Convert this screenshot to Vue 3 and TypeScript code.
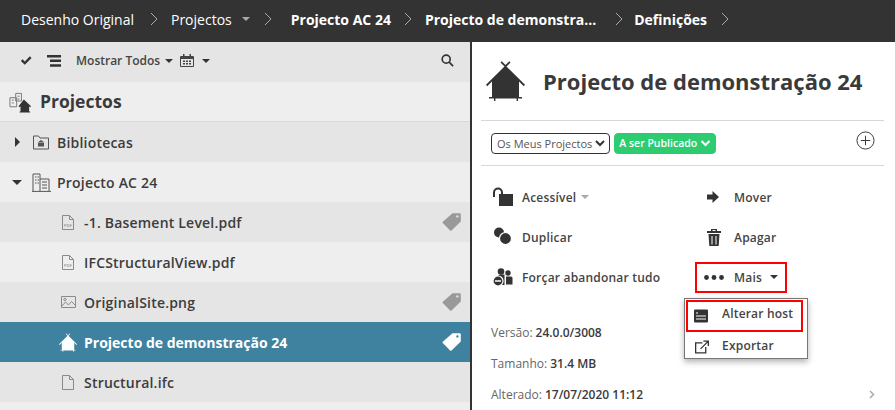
<script setup lang="ts">
interface Linha {
  nome: string;
  icone: "pdf" | "img" | "casa" | "doc";
  etiqueta?: boolean;
  ativa?: boolean;
}

const ficheiros: Linha[] = [
  { nome: "-1. Basement Level.pdf", icone: "pdf", etiqueta: true },
  { nome: "IFCStructuralView.pdf", icone: "pdf" },
  { nome: "OriginalSite.png", icone: "img", etiqueta: true },
  { nome: "Projecto de demonstração 24", icone: "casa", etiqueta: true, ativa: true },
  { nome: "Structural.ifc", icone: "doc" },
];

const casa =
  "M18.5 5.500 L14.500 1.500 L15.700 .3 L19.500 4.100 L23.300 .3 L24.500 1.500 L20.500 5.500 L39 23.800 L37.800 25.200 L33 20.500 L33 36 L36 36 L36 37.400 L32 37.400 L32 40 L30.600 40 L30.600 37.400 L9.400 37.400 L9.400 40 L8 40 L8 37.400 L3 37.400 L3 36 L6 36 L6 20.500 L1.200 25.200 L0 23.800 Z";
</script>

<template>
  <div class="app">
    <nav class="migalhas">
      <span class="m m1">Desenho Original</span>
      <svg class="seta" viewBox="0 0 8 14"><path d="M1 1l6 6-6 6" /></svg>
      <span class="m m2">Projectos</span>
      <i class="caret claro"></i>
      <svg class="seta s2" viewBox="0 0 8 14"><path d="M1 1l6 6-6 6" /></svg>
      <b class="m m3">Projecto AC 24</b>
      <svg class="seta" viewBox="0 0 8 14"><path d="M1 1l6 6-6 6" /></svg>
      <b class="m m4">Projecto de demonstra...</b>
      <svg class="seta s4" viewBox="0 0 8 14"><path d="M1 1l6 6-6 6" /></svg>
      <b class="m m5">Definições</b>
      <svg class="seta" viewBox="0 0 8 14"><path d="M1 1l6 6-6 6" /></svg>
    </nav>

    <div class="corpo">
      <aside class="esquerda">
        <div class="ferramentas">
          <svg class="ico-check" viewBox="0 0 14 12"><path d="M1 6.500l2-2 2.600 2.600L11.500 1l2 2-7.900 8z" /></svg>
          <svg class="ico-lista" viewBox="0 0 14 12">
            <path d="M0 0h14v2.400H0zM3 4.600h11V7H3zM3 9.200h11v2.600H3z" />
          </svg>
          <span class="mostrar">Mostrar Todos</span>
          <i class="caret"></i>
          <svg class="ico-cal" viewBox="0 0 14 13">
            <path d="M1 2h12a1 1 0 011 1v9a1 1 0 01-1 1H1a1 1 0 01-1-1V3a1 1 0 011-1zm0 3v7h12V5z" fill-rule="evenodd" />
            <path d="M3 0h1.500v3H3zM9.500 0H11v3H9.500zM3 6.500h2v1.500H3zM6 6.500h2v1.500H6zM9 6.500h2v1.500H9zM3 9h2v1.500H3zM6 9h2v1.500H6zM9 9h2v1.500H9z" />
          </svg>
          <i class="caret c-cal"></i>
          <svg class="ico-lupa" viewBox="0 0 14 14">
            <circle cx="5.600" cy="5.600" r="4.300" />
            <path d="M8.800 8.800L13 13" />
          </svg>
        </div>

        <div class="cabecalho">
          <svg class="ico-proj" viewBox="0 0 24 24">
            <path d="M1 7.500h7V17H1zM7 3h6v8H7z" class="predio" />
            <path d="M3 10h2M3 13h2M9 6h2M9 9h2" class="predio" />
            <path d="M15.500 9.500l7.500 7-1 1-1-1V22h1v1H11v-1h1v-5.500l-1 1-1-1z" />
          </svg>
          <h2>Projectos</h2>
        </div>

        <div class="linha escura">
          <i class="tri-dir"></i>
          <svg class="ico-pasta" viewBox="0 0 18 15">
            <path d="M1.500 1h5l1.500 2h8.500v11h-15z" />
            <path class="cheio" d="M9 5l3.500 2.500h-7zM6 8h6v3.500H6z" />
          </svg>
          <span class="texto">Bibliotecas</span>
        </div>
        <div class="linha">
          <i class="tri-baixo"></i>
          <svg class="ico-predio" viewBox="0 0 19 19">
            <path d="M1 18V1h7v17M8 6h9v12M0 18.400h19" />
            <path d="M3 4h1.500M5.500 4H7M3 7h1.500M5.500 7H7M3 10h1.500M5.500 10H7M10 9h5M10 12h5M10 15h5" />
          </svg>
          <span class="texto">Projecto AC 24</span>
        </div>

        <div
          v-for="(f, i) in ficheiros"
          :key="f.nome"
          class="linha ficheiro"
          :class="{ escura: i % 2 === 0, ativa: f.ativa }"
        >
          <span class="slot">
            <svg v-if="f.icone === 'pdf'" class="ico-fich" viewBox="0 0 12 15">
              <path d="M.5.5h7l4 4v10H.5zM7.500.5v4h4" />
              <text x="2" y="12" class="pdf-txt">PDF</text>
            </svg>
            <svg v-else-if="f.icone === 'doc'" class="ico-fich" viewBox="0 0 12 15">
              <path d="M.5.5h7l4 4v10H.5zM7.500.5v4h4" />
            </svg>
            <svg v-else-if="f.icone === 'img'" class="ico-img" viewBox="0 0 15 12">
              <path d="M.5.5h14v11H.5zM1 10l3.500-4 3 3 3-3.500 3.500 3.500" />
              <circle cx="4" cy="3.600" r="1.200" />
            </svg>
            <svg v-else class="ico-casa" viewBox="0 0 39 40"><path :d="casa" /></svg>
          </span>
          <span class="texto">{{ f.nome }}</span>
          <svg v-if="f.etiqueta" class="ico-tag" viewBox="0 0 19 19">
            <path d="M10.500 1.200h7.300a1 1 0 011 1v7.300L9.500 18.400a1 1 0 01-1.400 0L.8 11.100a1 1 0 010-1.400zM15.400 3.200a1.200 1.200 0 100 2.400 1.200 1.200 0 000-2.400z" fill-rule="evenodd" />
          </svg>
        </div>
        <div class="linha resto"></div>
      </aside>

      <main class="direita">
        <header class="topo">
          <svg class="casa-grande" viewBox="0 0 39 40"><path :d="casa" /></svg>
          <h1>Projecto de demonstração 24</h1>
        </header>

        <div class="filtros">
          <span class="sel">Os Meus Projectos<svg viewBox="0 0 10 7"><path d="M1 1l4 4 4-4" /></svg></span>
          <span class="sel verde">A ser Publicado<svg viewBox="0 0 10 7"><path d="M1 1l4 4 4-4" /></svg></span>
          <svg class="mais-redondo" viewBox="0 0 20 20">
            <circle cx="10" cy="10" r="9" />
            <path d="M5 10h10M10 5v10" />
          </svg>
        </div>

        <div class="acoes">
          <div class="acao">
            <svg class="a-ico" viewBox="0 0 22 20">
              <path class="cheio" d="M8 7h14v12H8z" />
              <path class="traco" d="M3 10V5.500a4 4 0 018 0V8" />
            </svg>
            <span>Acessível</span><i class="caret cinza"></i>
          </div>
          <div class="acao">
            <svg class="a-ico seta-mover" viewBox="0 0 12 12"><path class="cheio" d="M0 3.500h5.500V0L12 6l-6.500 6V8.500H0z" /></svg>
            <span>Mover</span>
          </div>
          <div class="acao">
            <svg class="a-ico" viewBox="0 0 22 20">
              <circle class="cheio" cx="8" cy="5.500" r="5" />
              <circle class="cheio borda-b" cx="14.500" cy="11.500" r="6" />
            </svg>
            <span>Duplicar</span>
          </div>
          <div class="acao">
            <svg class="a-ico lixo" viewBox="0 0 20 20">
              <path class="cheio" d="M3 4h14v2H3zM7 4V2h6v2h-1.500V3h-3v1zM4.500 7h11l-.8 12H5.300zM7.500 9v8.500h1V9zM11.500 9v8.500h1V9z" fill-rule="evenodd" />
            </svg>
            <span>Apagar</span>
          </div>
          <div class="acao">
            <svg class="a-ico" viewBox="0 0 22 20">
              <circle class="cheio" cx="10" cy="4.500" r="3.300" />
              <circle class="cheio" cx="17" cy="6" r="2.700" />
              <path class="cheio" d="M7 9a3 3 0 013-1.500h3.500V18H9zM15 9.500h5a1.500 1.500 0 011.500 1.500v6.500H15z" />
              <circle class="cheio borda-b" cx="7" cy="14" r="5" />
              <path class="corte" d="M4 14h6" />
            </svg>
            <span>Forçar abandonar tudo</span>
          </div>
          <div class="acao realce">
            <svg class="a-ico pontos" viewBox="0 0 20 5">
              <circle class="cheio" cx="2.500" cy="2.500" r="2.400" />
              <circle class="cheio" cx="10" cy="2.500" r="2.400" />
              <circle class="cheio" cx="17.500" cy="2.500" r="2.400" />
            </svg>
            <span>Mais</span><i class="caret"></i>
          </div>
        </div>

        <ul class="menu">
          <li class="selecionado">
            <svg viewBox="0 0 14 13">
              <path class="cheio" d="M1 0h12a1 1 0 011 1v11a1 1 0 01-1 1H1a1 1 0 01-1-1V1a1 1 0 011-1zM2 3v1h2V3zM2 6v1h10V6zM2 9v1h10V9z" fill-rule="evenodd" />
            </svg>
            <span>Alterar host</span>
          </li>
          <li>
            <svg viewBox="0 0 15 14">
              <path class="traco fino" d="M8 2.500H.7v10.800h10.800V7M6 9l8-8M9 .7h5.300V6" />
            </svg>
            <span>Exportar</span>
          </li>
        </ul>

        <div class="info">
          <p>Versão: <b>24.0.0/3008</b></p>
          <p>Tamanho: <b>31.4 MB</b></p>
          <p class="ultima">Alterado: <b>17/07/2020 11:12</b>
            <svg class="mini-seta" viewBox="0 0 6 9"><path d="M1 1l3.500 3.500L1 8" /></svg>
          </p>
        </div>
      </main>
    </div>
  </div>
</template>

<style>
html,
body {
  margin: 0;
  overflow: hidden;
}
</style>

<style scoped>
.app {
  width: 895px;
  height: 410px;
  overflow: hidden;
  font-family: "Open Sans", "Noto Sans", sans-serif;
  color: #333;
  background: #333;
}

.migalhas {
  height: 42px;
  box-sizing: border-box;
  padding-bottom: 4px;
  display: flex;
  align-items: center;
  padding-left: 21px;
  background: #333;
  color: #fff;
  font-size: 14px;
  white-space: nowrap;
}
.m {
  margin-right: 16px;
}
.m2 {
  margin-right: 10px;
}
.m3,
.m4,
.m5 {
  font-weight: 700;
  margin-right: 14px;
}
.m3 {
  margin-right: 13px;
}
.m4 {
  margin-right: 19px;
}
.seta {
  width: 8px;
  height: 14px;
  margin-right: 13px;
  flex: none;
  fill: none;
  stroke: #aaa;
  stroke-width: 1;
}
.s2 {
  margin-right: 19px;
}
.s4 {
  margin-right: 11px;
}

.caret {
  display: inline-block;
  width: 0;
  height: 0;
  flex: none;
  border-left: 4px solid transparent;
  border-right: 4px solid transparent;
  border-top: 4px solid #333;
}
.caret.claro {
  border-top-color: #aaa;
  margin-right: 14px;
}
.caret.cinza {
  border-top-color: #aaa;
  margin-left: 5px;
}

.corpo {
  display: flex;
  height: 368px;
}

.esquerda {
  width: 470px;
  flex: none;
  background: #eee;
}
.ferramentas {
  height: 40px;
  box-sizing: border-box;
  display: flex;
  align-items: center;
  padding: 0 16px 3px 20px;
  background: #e5e5e5;
}
.ico-check {
  width: 12px;
  height: 11px;
  fill: #333;
}
.ico-lista {
  width: 14px;
  height: 12px;
  margin-left: 15px;
  fill: #333;
}
.mostrar {
  margin-left: 15px;
  margin-right: 5px;
  font-size: 12px;
  font-weight: 600;
  color: #444;
}
.ico-cal {
  width: 14px;
  height: 13px;
  margin-left: 7px;
  margin-right: 8px;
  fill: #444;
}
.ico-lupa {
  width: 13px;
  height: 13px;
  margin-left: auto;
  fill: none;
  stroke: #333;
  stroke-width: 1.800;
}

.cabecalho {
  height: 39px;
  display: flex;
  align-items: center;
  padding-left: 9px;
  background: #eee;
  border-bottom: 1px solid #d8d8d8;
}
.cabecalho h2 {
  margin: 0 0 2px 8px;
  font-size: 17.500px;
  font-weight: 700;
  color: #3a3a3a;
}
.ico-proj {
  width: 23px;
  height: 24px;
  fill: #333;
}
.ico-proj .predio {
  fill: #eee;
  stroke: #777;
  stroke-width: 1;
}

.linha {
  height: 40px;
  display: flex;
  align-items: center;
  box-sizing: border-box;
  background: #eee;
  font-size: 14px;
  font-weight: 600;
  letter-spacing: 0.2px;
  color: #3c3c3c;
  position: relative;
}
.linha.escura {
  background: #e5e5e5;
}
.linha.ativa {
  background: #3f829f;
  color: #fff;
  font-weight: 700;
  letter-spacing: 0;
}
.tri-dir {
  width: 0;
  height: 0;
  margin-left: 15px;
  border-top: 5px solid transparent;
  border-bottom: 5px solid transparent;
  border-left: 5px solid #333;
}
.tri-baixo {
  width: 0;
  height: 0;
  margin-left: 12px;
  border-left: 5px solid transparent;
  border-right: 5px solid transparent;
  border-top: 5px solid #333;
}
.ico-pasta {
  width: 18px;
  height: 15px;
  margin-left: 12px;
  margin-right: 7px;
  fill: none;
  stroke: #555;
  stroke-width: 1;
}
.ico-pasta .cheio {
  fill: #555;
  stroke: none;
}
.ico-predio {
  width: 19px;
  height: 19px;
  margin-left: 10px;
  margin-right: 6px;
  fill: none;
  stroke: #555;
  stroke-width: 1;
}
.ficheiro .slot {
  width: 84px;
  flex: none;
  display: flex;
  justify-content: center;
  box-sizing: border-box;
  padding-left: 60px;
  padding-right: 8px;
}
.ico-fich {
  width: 12px;
  height: 15px;
  flex: none;
  fill: none;
  stroke: #8a8a8a;
  stroke-width: 1;
}
.pdf-txt {
  font-size: 4px;
  fill: #8a8a8a;
  stroke: none;
}
.ico-img {
  width: 15px;
  height: 12px;
  flex: none;
  fill: none;
  stroke: #8a8a8a;
  stroke-width: 1;
}
.ico-casa {
  width: 18px;
  height: 19px;
  flex: none;
  fill: #fff;
}
.ico-tag {
  width: 19px;
  height: 19px;
  position: absolute;
  right: 9px;
  top: 10px;
  fill: #999;
}
.ativa .ico-tag {
  fill: #fff;
}
.resto {
  height: 8px;
}

.direita {
  flex: 1;
  min-width: 0;
  position: relative;
  border-left: 2px solid #333;
  background: #fff;
  padding: 0 11px 0 9px;
}
.topo {
  height: 78px;
  display: flex;
  align-items: center;
  padding-left: 5px;
  border-bottom: 1px solid #d8d8d8;
}
.casa-grande {
  width: 39px;
  height: 40px;
  fill: #333;
  flex: none;
}
.topo h1 {
  margin: 0 0 0 18px;
  font-size: 22px;
  font-weight: 700;
  color: #3a3a3a;
  white-space: nowrap;
}

.filtros {
  height: 44px;
  display: flex;
  align-items: center;
  padding-left: 10px;
  border-bottom: 1px solid #d8d8d8;
  position: relative;
}
.sel {
  height: 21px;
  box-sizing: border-box;
  display: inline-flex;
  align-items: center;
  gap: 3px;
  padding: 0 4px 0 5px;
  border: 1px solid #333;
  border-radius: 4px;
  font-size: 11px;
  color: #555;
  white-space: nowrap;
}
.sel svg {
  width: 10px;
  height: 7px;
  fill: none;
  stroke: #333;
  stroke-width: 2;
}
.sel.verde {
  margin-left: 4px;
  padding: 0 4px;
  background: #2ecc71;
  border-color: #2ecc71;
  color: #fff;
  font-size: 10.500px;
  font-weight: 600;
}
.sel.verde svg {
  width: 11px;
  stroke: #fff;
}
.mais-redondo {
  width: 19px;
  height: 19px;
  position: absolute;
  right: 9px;
  top: 10px;
  fill: none;
  stroke: #333;
  stroke-width: 1;
}

.acoes {
  display: grid;
  grid-template-columns: 212px 1fr;
  grid-auto-rows: 40px;
  padding: 11px 0 0 10px;
}
.acao {
  display: flex;
  align-items: center;
  font-size: 12px;
  font-weight: 600;
  letter-spacing: 0.2px;
  color: #444;
}
.a-ico {
  width: 22px;
  height: 20px;
  flex: none;
  margin-right: 9px;
}
.a-ico.seta-mover {
  width: 12px;
  height: 12px;
  margin-left: 4px;
  margin-right: 15px;
}
.a-ico.lixo {
  width: 20px;
  margin-left: 1px;
  margin-right: 10px;
}
.a-ico.pontos {
  width: 20px;
  height: 5px;
  margin-right: 10px;
}
.cheio {
  fill: #333;
}
.traco {
  fill: none;
  stroke: #333;
  stroke-width: 2;
}
.traco.fino {
  stroke-width: 1.400;
}
.borda-b {
  stroke: #fff;
  stroke-width: 1.200;
}
.corte {
  stroke: #fff;
  stroke-width: 1.500;
}
.realce {
  justify-self: start;
  align-self: center;
  height: 31px;
  box-sizing: border-box;
  padding: 0 7px;
  margin-left: -8px;
  border: 2px solid #f00;
}
.realce .caret {
  margin-left: 8px;
}

.menu {
  position: absolute;
  left: 212px;
  top: 256px;
  width: 124px;
  height: 61px;
  box-sizing: border-box;
  margin: 0;
  padding: 1px;
  list-style: none;
  background: #fff;
  border: 1px solid #777;
  box-shadow: 0 3px 6px rgba(0, 0, 0, 0.3);
}
.menu li {
  height: 29px;
  display: flex;
  align-items: center;
  gap: 13px;
  padding-left: 9px;
  font-size: 12px;
  font-weight: 600;
  letter-spacing: 0.2px;
  color: #444;
  white-space: nowrap;
}
.menu li span {
  margin-bottom: 3px;
}
.menu li.selecionado {
  height: 32px;
  box-sizing: border-box;
  width: 117px;
  padding-left: 6px;
  gap: 14px;
  border: 2px solid #f00;
}
.menu li.selecionado span {
  margin-bottom: 5px;
}
.menu svg {
  width: 14px;
  height: 14px;
  flex: none;
}

.info {
  padding: 20px 0 0 10px;
}
.info p {
  margin: 0;
  height: 31px;
  display: flex;
  align-items: center;
  gap: 3px;
  font-size: 12px;
  color: #666;
}
.info b {
  color: #3a3a3a;
  font-weight: 600;
}
.ultima {
  position: relative;
}
.mini-seta {
  position: absolute;
  right: 9px;
  top: 11px;
  width: 6px;
  height: 9px;
  fill: none;
  stroke: #aaa;
  stroke-width: 1.500;
}
</style>
